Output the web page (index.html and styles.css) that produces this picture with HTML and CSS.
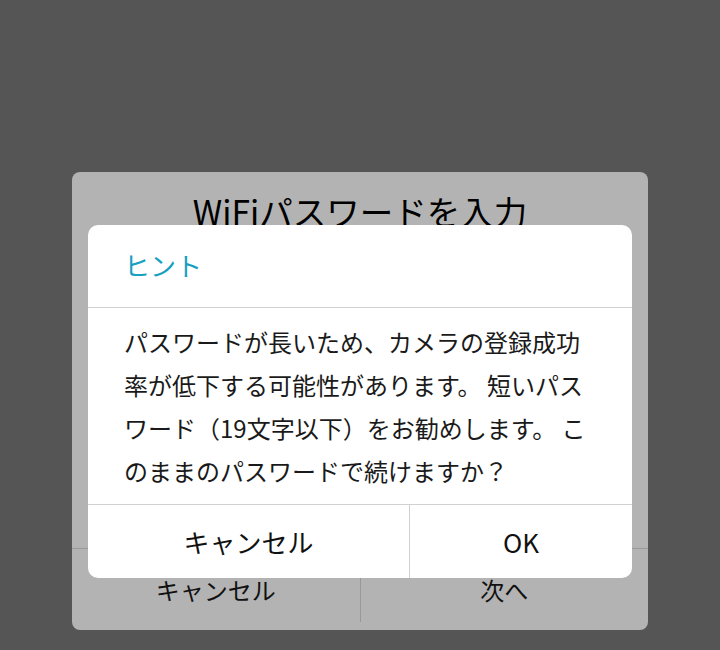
FILE: index.html
```html
<!DOCTYPE html>
<html lang="ja">
<head>
<meta charset="utf-8">
<link rel="stylesheet" href="styles.css">
</head>
<body>
<div class="screen">
  <div class="dialog-back">
    <div class="back-title">WiFiパスワードを入力</div>
    <div class="back-body"></div>
    <div class="back-actions">
      <div class="back-btn">キャンセル</div>
      <div class="back-divider"></div>
      <div class="back-btn">次へ</div>
    </div>
    <div class="dialog-front">
      <div class="front-header">ヒント</div>
      <div class="front-body">パスワードが長いため、カメラの登録成功率が低下する可能性があります。 短いパスワード（19文字以下）をお勧めします。 このままのパスワードで続けますか？</div>
      <div class="front-actions">
        <div class="front-btn front-btn-cancel">キャンセル</div>
        <div class="front-btn front-btn-ok">OK</div>
      </div>
    </div>
  </div>
</div>
</body>
</html>
```
FILE: styles.css
```css
html, body {
  margin: 0;
  padding: 0;
  background: #555555;
}
body {
  font-family: "Noto Sans CJK JP", "Noto Sans", sans-serif;
  color: #1a1a1a;
}
.screen {
  width: 720px;
  height: 650px;
  padding-top: 172px;
  box-sizing: border-box;
}
.dialog-back {
  position: relative;
  width: 576px;
  height: 458px;
  margin: 0 auto;
  background: #b3b3b3;
  border-radius: 8px;
  display: flex;
  flex-direction: column;
}
.back-title {
  padding-top: 12px;
  font-size: 33.5px;
  line-height: 54px;
  text-align: center;
  color: #000;
}
.back-body {
  flex: 1;
}
.back-actions {
  height: 81px;
  border-top: 1px solid #999999;
  display: flex;
}
.back-btn {
  flex: 1;
  display: flex;
  align-items: center;
  justify-content: center;
  font-size: 24px;
  color: #111;
}
.back-divider {
  width: 1px;
  height: 73px;
  background: #999999;
}
.dialog-front {
  position: absolute;
  top: 53px;
  left: 16px;
  right: 16px;
  background: #ffffff;
  border-radius: 10px;
  overflow: hidden;
}
.front-header {
  height: 83px;
  box-sizing: border-box;
  display: flex;
  align-items: center;
  padding: 0 36px 3px;
  font-size: 26px;
  color: #169fc1;
  border-bottom: 1px solid #d0d0d0;
}
.front-body {
  padding: 12px 36px 12px;
  font-size: 24px;
  line-height: 43px;
  color: #1a1a1a;
  border-bottom: 1px solid #d0d0d0;
}
.front-actions {
  height: 73px;
  display: flex;
}
.front-btn {
  display: flex;
  align-items: center;
  justify-content: center;
  font-size: 26px;
  color: #111;
}
.front-btn-cancel {
  flex: 0 0 321px;
}
.front-btn-ok {
  flex: 1 1 auto;
  border-left: 1px solid #d0d0d0;
}
```
